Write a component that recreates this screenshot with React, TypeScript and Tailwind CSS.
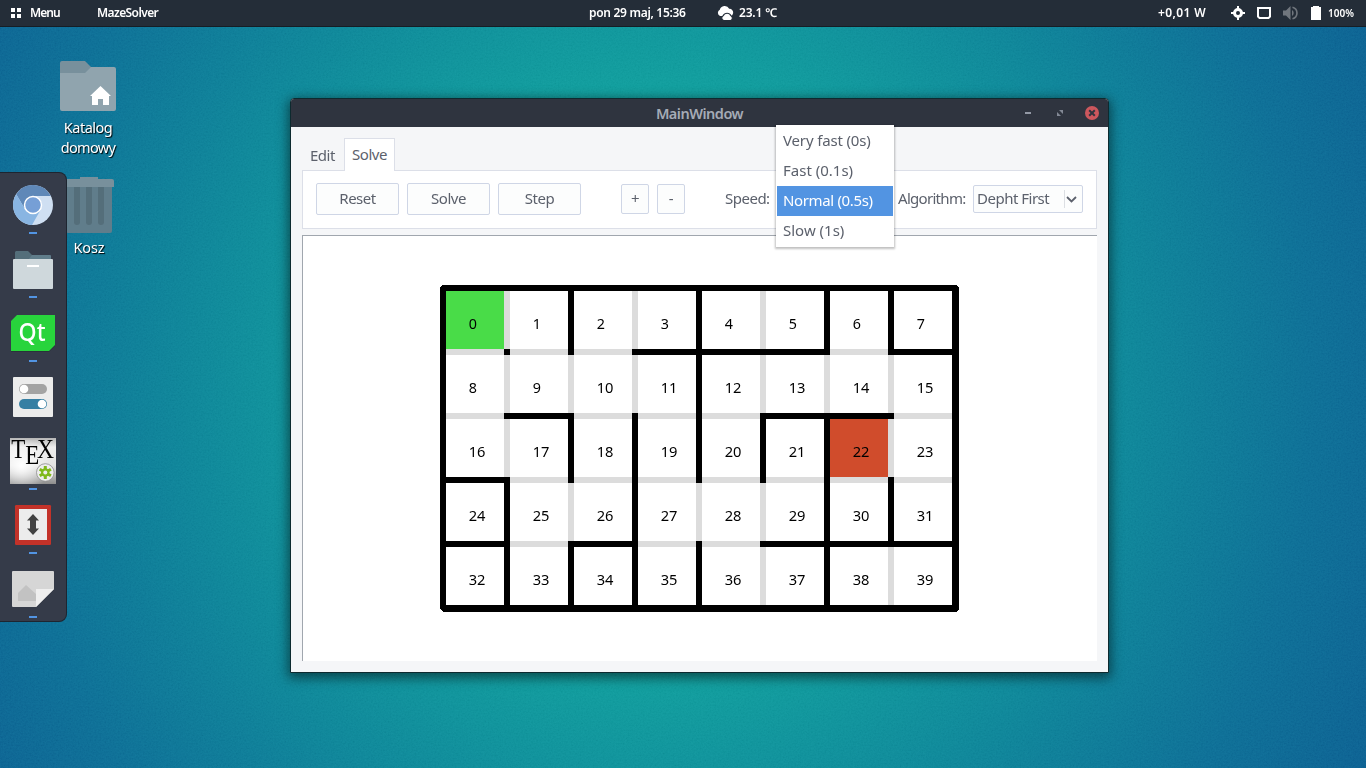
import React from "react";

const COLS = 8;
const ROWS = 5;
const PITCH = 64;
const WALL = 6;

// [boundary column, row] pairs of solid vertical walls
const V_WALLS: [number, number][] = [
  [1, 3], [1, 4],
  [2, 0], [2, 2], [2, 4],
  [3, 2], [3, 3], [3, 4],
  [4, 0], [4, 1], [4, 2], [4, 4],
  [5, 2],
  [6, 0], [6, 2], [6, 3], [6, 4],
  [7, 0], [7, 3],
];

// [column, boundary row] pairs of solid horizontal walls
const H_WALLS: [number, number][] = [
  [3, 1], [4, 1], [5, 1], [7, 1],
  [1, 2], [5, 2], [6, 2],
  [0, 3],
  [0, 4], [2, 4], [5, 4], [6, 4], [7, 4],
];

function Maze() {
  const cells = Array.from({ length: COLS * ROWS }, (_, i) => i);
  return (
    <svg width="519" height="327" viewBox="0 0 519 327" shapeRendering="crispEdges" className="block">
      {Array.from({ length: COLS - 1 }, (_, i) => (
        <rect key={"gv" + i} x={(i + 1) * PITCH} y={0} width={WALL} height={323} fill="#dcdcdc" />
      ))}
      {Array.from({ length: ROWS - 1 }, (_, i) => (
        <rect key={"gh" + i} x={0} y={(i + 1) * PITCH} width={515} height={WALL} fill="#dcdcdc" />
      ))}
      <rect x={6} y={6} width={58} height={58} fill="#49dc48" />
      <rect x={390} y={134} width={58} height={58} fill="#d04c2c" />
      {V_WALLS.map(([c, r]) => (
        <rect key={`v${c}-${r}`} x={c * PITCH} y={r * PITCH} width={WALL} height={PITCH + WALL} />
      ))}
      {H_WALLS.map(([c, r]) => (
        <rect key={`h${c}-${r}`} x={c * PITCH} y={r * PITCH} width={PITCH + WALL} height={WALL} />
      ))}
      <rect x={64} y={64} width={6} height={6} />
      <path
        fillRule="evenodd"
        d="M2 0H516L519 3V324L516 327H3L0 324V2ZM6 6V320H512V6Z"
      />
      {cells.map((n) => (
        <text
          key={n}
          x={28.7 + (n % COLS) * PITCH}
          y={44.2 + Math.floor(n / COLS) * PITCH}
          textLength={n < 10 ? 8.2 : 16.8}
          lengthAdjust="spacingAndGlyphs"
          className="text-[15px]"
        >
          {n}
        </text>
      ))}
    </svg>
  );
}

function TopBar() {
  return (
    <header className="flex h-[27px] shrink-0 items-center border-b border-[#161d25] bg-[#242d38] text-[12px] font-semibold text-white">
      <div className="flex w-[97px] items-center pl-[11px]">
        <svg width="10" height="10" className="mr-[9px]" fill="#fff" shapeRendering="crispEdges">
          <rect width="4" height="4" />
          <rect x="6" width="4" height="4" />
          <rect y="6" width="4" height="4" />
          <rect x="6" y="6" width="4" height="4" />
        </svg>
        <span className="tracking-[-0.9px]">Menu</span>
      </div>
      <span className="w-[492px] tracking-[-0.6px]">MazeSolver</span>
      <span className="w-[128px] tracking-[-0.3px] whitespace-nowrap">pon 29 maj, 15:36</span>
      <svg width="17" height="16" viewBox="0 0 17 16" className="mr-[5px]">
        <path fill="#fff" d="M3 11a3.400 3.400 0 0 1-.2-6.200A5 5 0 0 1 12.200 3.800 3.700 3.700 0 0 1 16 8.500a3.500 3.500 0 0 1-2.500 2.800z" />
        <path fill="#fff" stroke="#242d38" strokeWidth="1.100" d="M7 15.600a2.600 2.600 0 0 1-.8-4.900 4.200 4.200 0 0 1 7.700 0A2.600 2.600 0 0 1 13 15.600z" />
      </svg>
      <span className="w-[419px] tracking-[-0.2px]">
        23.1 <span className="tracking-[-1px]">℃</span>
      </span>
      <span className="w-[73px] tracking-[0.4px]">+0,01 W</span>
      <svg width="14" height="14" viewBox="0 0 14 14" className="mr-[12px]">
        <circle cx="7" cy="7" r="3.500" fill="none" stroke="#fff" strokeWidth="3" />
        <path stroke="#fff" strokeWidth="2" d="M7 0v3M7 11v3M0 7h3M11 7h3" />
      </svg>
      <svg width="14" height="12" viewBox="0 0 14 12" className="mr-[12px]">
        <path fill="none" stroke="#fff" strokeWidth="2" d="M1 1h12v8.500l-1.500 1.500h-9L1 9.500z" />
      </svg>
      <svg width="15" height="14" viewBox="0 0 15 14" className="mr-[13px] opacity-35">
        <path fill="#fff" d="M0 4.500h3L7.500 0v14L3 9.500H0z" />
        <path fill="#fff" d="M9 4a3.500 3.500 0 0 1 0 6z" />
        <path fill="none" stroke="#fff" strokeWidth="1.600" d="M9.500 1.200a6 6 0 0 1 0 11.600" />
      </svg>
      <svg width="10" height="14" viewBox="0 0 10 14" fill="#fff" className="mr-[7px]" shapeRendering="crispEdges">
        <rect x="2" width="6" height="2" />
        <rect y="1" width="10" height="13" />
      </svg>
      <span className="text-[10px]">100%</span>
    </header>
  );
}

function DockItem({ running = true, children }: { running?: boolean; children: React.ReactNode }) {
  return (
    <svg width="66" height="64" viewBox="0 0 66 64" className="block">
      {children}
      {running && <rect x="29" y="59" width="8" height="2" fill="#5294e2" />}
    </svg>
  );
}

function Dock() {
  return (
    <nav className="absolute top-[172px] left-0 flex h-[450px] w-[67px] flex-col rounded-r-[8px] border border-l-0 border-[#1e2530] bg-[#353b49]">
      <DockItem>
        <circle cx="33" cy="32" r="20" fill="#cfdff2" />
        <path fill="#5f88b8" d="M16.200 21.200 25.200 36.500 33 23H50.800A20 20 0 0 0 16.200 21.200z" />
        <path fill="#89b5e2" d="M16.200 21.200A20 20 0 0 0 32 52L40.800 36.500 33 41 25.200 36.500z" />
        <circle cx="33" cy="32" r="8.500" fill="#769fd6" stroke="#fff" strokeWidth="1.500" />
      </DockItem>
      <DockItem>
        <path fill="#607d8b" d="M15 18h35q1 0 1 1v5H15z" />
        <path fill="#546e7a" d="M16 14h12l4 4-4 5H15v-8z" />
        <rect x="13" y="22" width="40" height="30" rx="1" fill="#cfd8dc" />
        <rect x="27" y="28" width="12" height="2" fill="#fff" />
      </DockItem>
      <DockItem>
        <path fill="#1d2b2c" opacity=".5" d="M17 15h38v30l-6 6H11V20z" />
        <path fill="#28d43c" d="M17 14h38v30l-6 6H11V20z" />
        <text
          x="18.500"
          y="40"
          textLength="27"
          lengthAdjust="spacingAndGlyphs"
          fill="#fff"
          className="text-[25px] font-medium"
        >
          Qt
        </text>
      </DockItem>
      <DockItem running={false}>
        <rect x="13" y="12" width="40" height="40" rx="1" fill="#ececec" />
        <rect x="19" y="19" width="28" height="10" rx="5" fill="#a3a3a3" />
        <circle cx="24" cy="24" r="4.300" fill="#fff" />
        <rect x="19" y="34" width="28" height="10" rx="5" fill="#367fa3" />
        <circle cx="42" cy="39" r="4.300" fill="#fff" />
      </DockItem>
      <DockItem>
        <defs>
          <linearGradient id="tex" x1="0" y1="0" x2="0" y2="1">
            <stop offset="0" stopColor="#b5b5b5" />
            <stop offset=".2" stopColor="#eee" />
            <stop offset=".6" stopColor="#e4e4e4" />
            <stop offset="1" stopColor="#8d8d8d" />
          </linearGradient>
          <radialGradient id="texGlow" cx=".25" cy=".6" r=".6">
            <stop offset="0" stopColor="#fff" />
            <stop offset="1" stopColor="#fff" stopOpacity="0" />
          </radialGradient>
        </defs>
        <rect x="10" y="9" width="46" height="46" fill="url(#tex)" />
        <rect x="10" y="9" width="46" height="46" fill="url(#texGlow)" />
        <g className="font-['Liberation_Serif',serif] text-[27px]">
          <text x="11.200" y="29" textLength="14" lengthAdjust="spacingAndGlyphs">T</text>
          <text x="25.200" y="34.800" textLength="14" lengthAdjust="spacingAndGlyphs">E</text>
          <text x="37" y="29" textLength="17" lengthAdjust="spacingAndGlyphs">X</text>
        </g>
        <circle cx="45.300" cy="43.500" r="8.800" fill="#ededed" stroke="#8b8b8b" strokeWidth=".8" />
        <path stroke="#7fb81b" strokeWidth="3" d="M45.300 37v13M39.700 40.200l11.200 6.600M39.700 46.800l11.200-6.600" />
        <circle cx="45.300" cy="43.500" r="4.200" fill="#7fb81b" />
        <circle cx="45.300" cy="43.500" r="2" fill="#ededed" />
      </DockItem>
      <DockItem>
        <rect x="15" y="12" width="36" height="40" rx="1.200" fill="#c33229" />
        <rect x="19" y="16" width="28" height="31" fill="#ececec" />
        <path fill="#424242" d="M33 21l6 6.500h-3v8h3L33 42l-6-6.500h3v-8h-3z" />
      </DockItem>
      <DockItem>
        <path fill="#d6d6d6" d="M13 14h40q1 0 1 1v17L36 50H13q-1 0-1-1V15q0-1 1-1z" />
        <path fill="#c2c2c2" d="M18 36l8-8 10 9v7H18z" />
        <path fill="#efefef" d="M36 32h18L36 50z" />
      </DockItem>
    </nav>
  );
}

function DesktopIcons() {
  return (
    <>
      <div className="absolute top-[60px] left-[48px] flex w-[80px] flex-col items-center text-center text-[14.500px] leading-[20px] text-white [text-shadow:1px_1px_1px_#000]">
        <svg width="56" height="52" viewBox="0 0 56 52" className="mb-[5px]">
          <path fill="#78909c" d="M2 1h23l6 6v8H0V3q0-2 2-2z" />
          <path fill="#90a4ae" d="M31 7h23q2 0 2 2v40q0 2-2 2H2q-2 0-2-2V13h25z" />
          <path fill="#fff" d="M40.500 26 51 36h-2v9h-6v-6h-5v6h-6v-9h-2z" />
        </svg>
        <span className="tracking-[-0.5px]">Katalog</span>
        <span className="tracking-[-0.7px]">domowy</span>
      </div>
      <div className="absolute top-[176px] left-[49px] flex w-[80px] flex-col items-center text-[14.500px] leading-[20px] text-white [text-shadow:1px_1px_1px_#000]">
        <svg width="52" height="58" viewBox="0 0 52 58" className="mb-[3px]">
          <path fill="#607d8b" d="M3 8h46v47q0 2-2 2H5q-2 0-2-2z" />
          <path fill="#546e7a" d="M11 8h6v38a3 3 0 0 1-6 0zM23 8h6v38a3 3 0 0 1-6 0zM35 8h6v38a3 3 0 0 1-6 0z" />
          <path fill="#78909c" d="M17 1h18v2h14q2 0 2 2v6H1V5q0-2 2-2h14z" />
        </svg>
        <span className="tracking-[-0.1px]">Kosz</span>
      </div>
    </>
  );
}

function Button({ className, children }: { className: string; children: React.ReactNode }) {
  return (
    <button className={`flex items-center justify-center rounded-[2px] border border-[#cfd6e6] bg-[#fcfdfd] pb-[2px] ${className}`}>
      {children}
    </button>
  );
}

function MainWindow() {
  return (
    <main className="absolute top-[98px] left-[290px] flex h-[575px] w-[819px] flex-col rounded-t-[4px] border border-[#0d2a2f] bg-[#f5f6f8] text-[15px] tracking-[-0.5px] text-[#5c616c] shadow-[0_3px_12px_2px_rgba(0,0,0,0.5)]">
      <div className="flex h-[28px] shrink-0 items-center rounded-t-[3px] bg-[#2f343f]">
        <span className="flex-1 pl-[92px] text-center text-[14.500px] leading-[20px] font-semibold tracking-[-0.5px] text-[#a5abb6]">
          MainWindow
        </span>
        <svg width="92" height="28" viewBox="0 0 92 28">
          <path fill="#9399a5" d="M9 13h6v2H9z" />
          <path fill="#838995" d="M43 11h4v4zM41 13v4h4z" />
          <circle cx="76" cy="14" r="7" fill="#cc575d" />
          <path stroke="#2f343f" strokeWidth="2" d="M73.200 11.200l5.600 5.600M78.800 11.200l-5.600 5.600" />
        </svg>
      </div>

      <div className="flex flex-1 flex-col px-[11px] pt-[11px] pb-[11px]">
        <div className="flex h-[32px] items-start leading-[21px]">
          <span className="w-[42px] pt-[7px] pl-[8px]">Edit</span>
          <div className="z-10 flex h-[33px] w-[51px] justify-center border border-b-0 border-[#dcdfe8] bg-white pt-[5px]">
            Solve
          </div>
        </div>
        <div className="flex h-[59px] items-center border border-[#dcdfe8] bg-white pb-px pl-[13px]">
          <Button className="mr-[8px] h-[32px] w-[83px]">Reset</Button>
          <Button className="mr-[8px] h-[32px] w-[83px]">Solve</Button>
          <Button className="mr-[40px] h-[32px] w-[83px]">Step</Button>
          <Button className="mr-[8px] h-[30px] w-[28px]">+</Button>
          <Button className="mr-[40px] h-[30px] w-[28px]">-</Button>
          <span className="w-[173px] pb-[2px]">Speed:</span>
          <span className="w-[75px] pb-[2px] tracking-[-0.7px]">Algorithm:</span>
          <div className="flex h-[28px] w-[110px] items-center rounded-[2px] border border-[#cfd6e6] bg-[#fcfdfd] pl-[3px]">
            <span className="w-[87px] pb-[2px] whitespace-nowrap">Depht First</span>
            <svg width="15" height="18" viewBox="0 0 15 18">
              <path fill="#dcdfe3" d="M0 0h1v18H0z" />
              <path fill="none" stroke="#5c616c" strokeWidth="1.800" d="M3 7l4.500 4.500L12 7" />
            </svg>
          </div>
        </div>
        <div className="mt-[6px] flex flex-1 items-start border-t border-l border-[#a0a6ae] bg-white pt-[49px] pl-[137px] tracking-normal">
          <Maze />
        </div>
      </div>
    </main>
  );
}

function SpeedMenu() {
  const options = [
    { label: "Very fast (0s)", style: "tracking-[-0.15px]" },
    { label: "Fast (0.1s)", style: "" },
    { label: "Normal (0.5s)", style: "tracking-[-0.35px] bg-[#5294e2] text-white" },
    { label: "Slow (1s)", style: "" },
  ];
  return (
    <ul className="absolute top-[125px] left-[776px] flex w-[118px] flex-col bg-white p-px text-[15px] text-[#5c616c] shadow-[0_1px_2px_1px_rgba(0,0,0,0.25)]">
      {options.map(({ label, style }) => (
        <li key={label} className={`flex h-[30px] items-center pb-[2px] pl-[6px] whitespace-nowrap ${style}`}>
          {label}
        </li>
      ))}
    </ul>
  );
}

export default function App() {
  return (
    <div className="relative flex h-[768px] w-[1366px] flex-col overflow-hidden bg-[radial-gradient(ellipse_840px_880px_at_660px_380px,#11a49d_0%,#109c9b_33%,#0e8497_56%,#0d6c94_78%,#0c5a8f_100%)] font-['Noto_Sans',sans-serif]">
      <svg className="absolute inset-0 opacity-20 mix-blend-soft-light" width="1366" height="768">
        <filter id="grain">
          <feTurbulence type="fractalNoise" baseFrequency="0.6" numOctaves="2" />
          <feColorMatrix type="matrix" values="0 1 0 0 0  0 1 0 0 0  0 1 0 0 0  0 0 0 0 1" />
        </filter>
        <rect width="1366" height="768" filter="url(#grain)" />
      </svg>
      <div className="relative">
        <TopBar />
      </div>
      <DesktopIcons />
      <Dock />
      <MainWindow />
      <SpeedMenu />
    </div>
  );
}
